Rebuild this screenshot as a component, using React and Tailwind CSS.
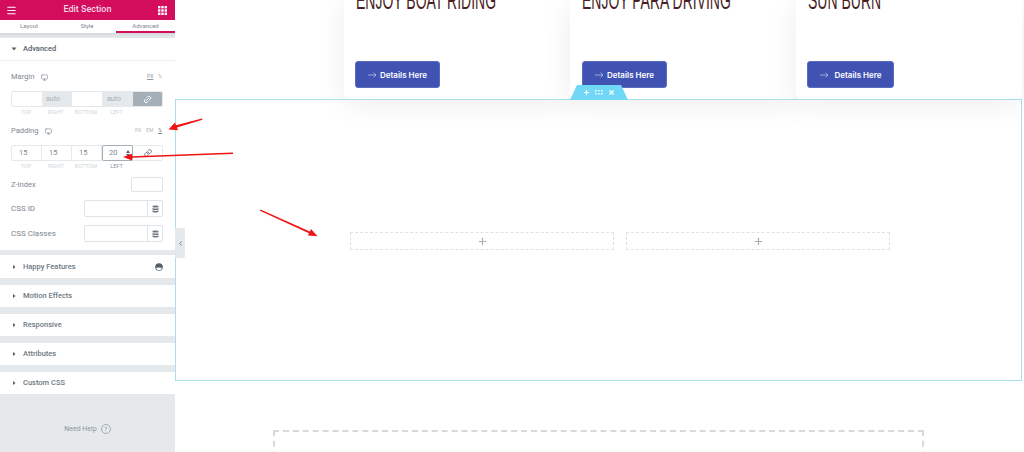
import { Monitor, Link, Link2, Menu, ChevronLeft, Plus, X } from "lucide-react";

const cards = [
  { title: "ENJOY BOAT RIDING", btn: "w-[85px] ml-[11px]", gap: "gap-[3px]" },
  { title: "ENJOY PARA DRIVING", btn: "w-[85px] ml-[12px]", gap: "gap-[3px]" },
  { title: "SUN BURN", btn: "w-[87px] ml-[11px]", gap: "gap-1.5" },
];

const sections = ["Motion Effects", "Responsive", "Attributes", "Custom CSS"];

const Caret = ({ down }) => (
  <svg width="6" height="6" viewBox="0 0 6 6" className="shrink-0 fill-[#556068]">
    {down ? <path d="M0.5 1.5h5L3 4.5z" /> : <path d="M2 1l2.5 2L2 5z" />}
  </svg>
);

const DbIcon = () => (
  <svg width="7" height="8" viewBox="0 0 7 8" className="fill-[#6d7882]">
    <path d="M0.5 1.2C0.5.4 6.5.4 6.5 1.2v.8c0 .8-6 .8-6 0zM.5 3c1.5.8 4.500.8 6 0v1.400c0 .8-6 .8-6 0zM.5 5.300c1.500.8 4.500.8 6 0v1.500c0 .9-6 .9-6 0z" />
  </svg>
);

const GridIcon = () => (
  <svg width="9" height="9" viewBox="0 0 9 9" className="fill-white">
    {[0, 3.3, 6.6].map((x) =>
      [0, 3.3, 6.6].map((y) => <rect key={`${x}-${y}`} x={x} y={y} width="2.400" height="2.400" />)
    )}
  </svg>
);

const Arrow = () => (
  <svg width="9" height="6" viewBox="0 0 9 6" fill="none" className="shrink-0 stroke-[#c5caea]">
    <path d="M0 3h8M5.500.7L8 3 5.500 5.300" strokeWidth="0.700" />
  </svg>
);

const DimLabels = ({ leftClass = "" }) => (
  <div className="mt-[2px] flex text-center text-[5.500px] leading-[7px] uppercase text-[#d0d6db]">
    <span className="w-[30px]">Top</span>
    <span className="w-[30px]">Right</span>
    <span className="w-[30px]">Bottom</span>
    <span className={`w-[31px] ${leftClass}`}>Left</span>
  </div>
);

const TextRow = ({ label, className }) => (
  <div className={`flex h-[17px] items-center justify-between pl-[11px] pr-[12px] ${className}`}>
    <span className="text-[8px] text-[#7d8790]">{label}</span>
    <div className="flex h-[17px] w-[79px] rounded-[2px] border border-[#dfe3e6] bg-white">
      <div className="flex-1 border-r border-[#dfe3e6]" />
      <div className="flex w-[14px] items-center justify-center">
        <DbIcon />
      </div>
    </div>
  </div>
);

const Sidebar = () => (
  <aside className="flex h-[452px] w-[175px] shrink-0 flex-col bg-[#e6e9ec] font-['Roboto',sans-serif]">
    <div className="flex h-[20px] items-center justify-between bg-[#d30c5c] pl-[6px] pr-[8px]">
      <Menu size={11} className="text-white" strokeWidth={2.500} />
      <span className="text-[9px] font-medium text-[#f9d8e6]">Edit Section</span>
      <GridIcon />
    </div>
    <div className="flex h-[13px] bg-white text-center text-[6px] leading-[7px] text-[#7d8790]">
      <span className="w-[58px] pt-[2px]">Layout</span>
      <span className="w-[58px] pt-[2px]">Style</span>
      <span className="h-[13px] w-[59px] border-b-2 border-[#d30c5c] pt-[2px]">Advanced</span>
    </div>
    <div className="h-[5px] bg-gradient-to-b from-[#d5d9dd] to-[#e6e9ec]" />

    <div className="h-[212px] bg-white">
      <div className="flex h-[23px] items-center gap-[6px] border-b border-[#eceef0] pl-[11px]">
        <Caret down />
        <span className="text-[7.500px] font-medium text-[#556068]">Advanced</span>
      </div>

      <div className="mt-[11px] flex h-[10px] items-center pl-[11px] pr-[13px] text-[7.500px] text-[#7d8790]">
        <span>Margin</span>
        <Monitor size={7} className="ml-[7px]" />
        <span className="ml-auto text-[5px] text-[#8b959c] underline">PX</span>
        <span className="ml-[5px] text-[5px] text-[#a4afb7]">%</span>
      </div>
      <div className="ml-[11px] mt-[9px] w-[152px]">
        <div className="flex h-[16px] overflow-hidden rounded-[2px] border border-[#e6e9ec] text-[7px] text-[#a4afb7]">
          <div className="w-[30px] bg-white" />
          <div className="flex w-[30px] items-center bg-[#e6e9ec] pl-[4px]">auto</div>
          <div className="w-[30px] bg-white" />
          <div className="flex w-[31px] items-center bg-[#e6e9ec] pl-[5px]">auto</div>
          <div className="flex flex-1 items-center justify-center bg-[#a4afb7]">
            <Link2 size={9} className="-rotate-45 text-white" strokeWidth={2.500} />
          </div>
        </div>
        <DimLabels />
      </div>

      <div className="mt-[10px] flex h-[10px] items-center pl-[11px] pr-[13px] text-[7.500px] text-[#7d8790]">
        <span>Padding</span>
        <Monitor size={7} className="ml-[7px]" />
        <span className="ml-auto text-[5px] text-[#b4bcc3]">PX</span>
        <span className="ml-[5px] text-[5px] text-[#b4bcc3]">EM</span>
        <span className="ml-[5px] text-[5px] text-[#6d7882] underline">%</span>
      </div>
      <div className="ml-[11px] mt-[9px] w-[152px]">
        <div className="flex h-[16px] rounded-[2px] border border-[#e6e9ec] text-[7.500px] text-[#7d8790]">
          {["15", "15", "15"].map((v, i) => (
            <div key={i} className="flex w-[30px] items-center border-r border-[#e6e9ec] pl-[7px]">
              {v}
            </div>
          ))}
          <div className="-my-px flex w-[31px] items-center justify-between rounded-[2px] border border-[#a4afb7] pl-[6px] pr-[2px]">
            <span>20</span>
            <span className="flex flex-col gap-px">
              <span className="h-0 w-0 border-x-[2.500px] border-b-[3px] border-x-transparent border-b-[#556068]" />
              <span className="h-0 w-0 border-x-[2.500px] border-t-[3px] border-x-transparent border-t-[#556068]" />
            </span>
          </div>
          <div className="flex flex-1 items-center justify-center">
            <Link size={8} className="text-[#556068]" strokeWidth={2.500} />
          </div>
        </div>
        <DimLabels leftClass="text-[#8b959c]" />
      </div>

      <div className="mt-[7px] flex h-[15px] items-center justify-between pl-[11px] pr-[12px]">
        <span className="text-[7.500px] text-[#7d8790]">Z-Index</span>
        <div className="h-[15px] w-[32px] rounded-[2px] border border-[#dfe3e6]" />
      </div>
      <TextRow label="CSS ID" className="mt-[8px]" />
      <TextRow label="CSS Classes" className="mt-[8px]" />
    </div>

    <div className="mt-[5px] flex h-[23px] items-center gap-[6px] bg-white pl-[11px] pr-[12px]">
      <Caret />
      <span className="text-[7.500px] font-medium text-[#6d7882]">Happy Features</span>
      <svg width="8" height="8" viewBox="0 0 8 8" className="ml-auto">
        <circle cx="4" cy="4" r="3.800" fill="#556068" />
        <path d="M1 5c2-.8 4-.8 6 0-.6 1.500-1.800 2.200-3 2.200S1.600 6.500 1 5z" fill="#fff" />
      </svg>
    </div>
    {sections.map((s) => (
      <div key={s} className="mt-[6.500px] flex h-[22.500px] items-center gap-[6px] bg-white pl-[11px]">
        <Caret />
        <span className="text-[7.500px] font-medium text-[#6d7882]">{s}</span>
      </div>
    ))}

    <div className="mt-[30px] flex items-center justify-center gap-[4px] text-[7px] text-[#8b959c]">
      <span>Need Help</span>
      <span className="flex h-[10px] w-[10px] items-center justify-center rounded-full border border-[#a4afb7] text-[6px] leading-none">
        ?
      </span>
    </div>
  </aside>
);

const Card = ({ card }) => (
  <div className="relative h-[99px] w-[226px] shrink-0 rounded-b-[5px] bg-white shadow-[0_4px_30px_rgba(0,0,0,0.08)]">
    <div className="-mt-[13px] ml-[12px] h-[26px] origin-left scale-x-[0.56] whitespace-nowrap font-['Liberation_Sans',sans-serif] text-[25px] leading-[26px] text-[#4a1f24]">
      {card.title}
    </div>
    <div
      className={`mt-[48px] flex h-[27px] items-center justify-center ${card.gap} rounded-[3px] border border-[#5a6bc0] bg-[#4053b3] font-['Inter',sans-serif] text-[8px] font-semibold text-white ${card.btn}`}
    >
      <Arrow />
      <span>Details Here</span>
    </div>
  </div>
);

const Column = () => (
  <div className="flex h-[18px] w-[264px] items-center justify-center border border-dashed border-[#dfe3e6]">
    <Plus size={11} className="text-[#a4afb7]" strokeWidth={2.500} />
  </div>
);

export default function App() {
  return (
    <div className="relative flex h-[452px] w-[1024px] overflow-hidden bg-white">
      <Sidebar />

      <main className="relative flex-1">
        <div className="relative flex h-[99px] pl-[169px]">
          {cards.map((c) => (
            <Card key={c.title} card={c} />
          ))}
        </div>

        <section className="relative flex h-[282px] w-[847px] items-center gap-[12px] border border-[#a9e0ef] pl-[174px] pt-[2px]">
          <div className="absolute left-[394px] -top-[15px] flex h-[15px] w-[58px] items-center justify-center gap-[5px] bg-[#71d7f7] text-white [clip-path:polygon(12%_0,88%_0,100%_100%,0_100%)]">
            <Plus size={7} strokeWidth={4} />
            <svg width="8" height="5" viewBox="0 0 8 5" className="fill-white">
              {[0, 3, 6].map((x) =>
                [0, 3].map((y) => <rect key={`${x}-${y}`} x={x} y={y} width="1.500" height="1.500" />)
              )}
            </svg>
            <X size={7} strokeWidth={4} />
          </div>
          <Column />
          <Column />
        </section>

        <div className="ml-[98px] mt-[49px] h-[60px] w-[651px] border-2 border-dashed border-[#d5dadf]" />
      </main>

      <div className="absolute left-[175px] top-[228px] flex h-[30px] w-[10px] items-center justify-center rounded-r-[2px] bg-[#e6e9ec]">
        <ChevronLeft size={7} className="text-[#6d7882]" strokeWidth={3} />
      </div>

      <svg width="1024" height="452" viewBox="0 0 1024 452" className="pointer-events-none absolute left-0 top-0">
        <g fill="#f01414">
          <path d="M202 118.500l.5 1.300L177 127.500l1 2.700-9.500-.7 6.500-7 1 2.800z" />
          <path d="M233 152.500v1.400L132 157.800v2.700l-9-3.500 9-3.200v2.400z" />
          <path d="M260.500 209.500l-.6 1.200L309 233.200l-1.200 2.400 9.700.6-6.500-7.300-1.200 2.500z" />
        </g>
      </svg>
    </div>
  );
}
